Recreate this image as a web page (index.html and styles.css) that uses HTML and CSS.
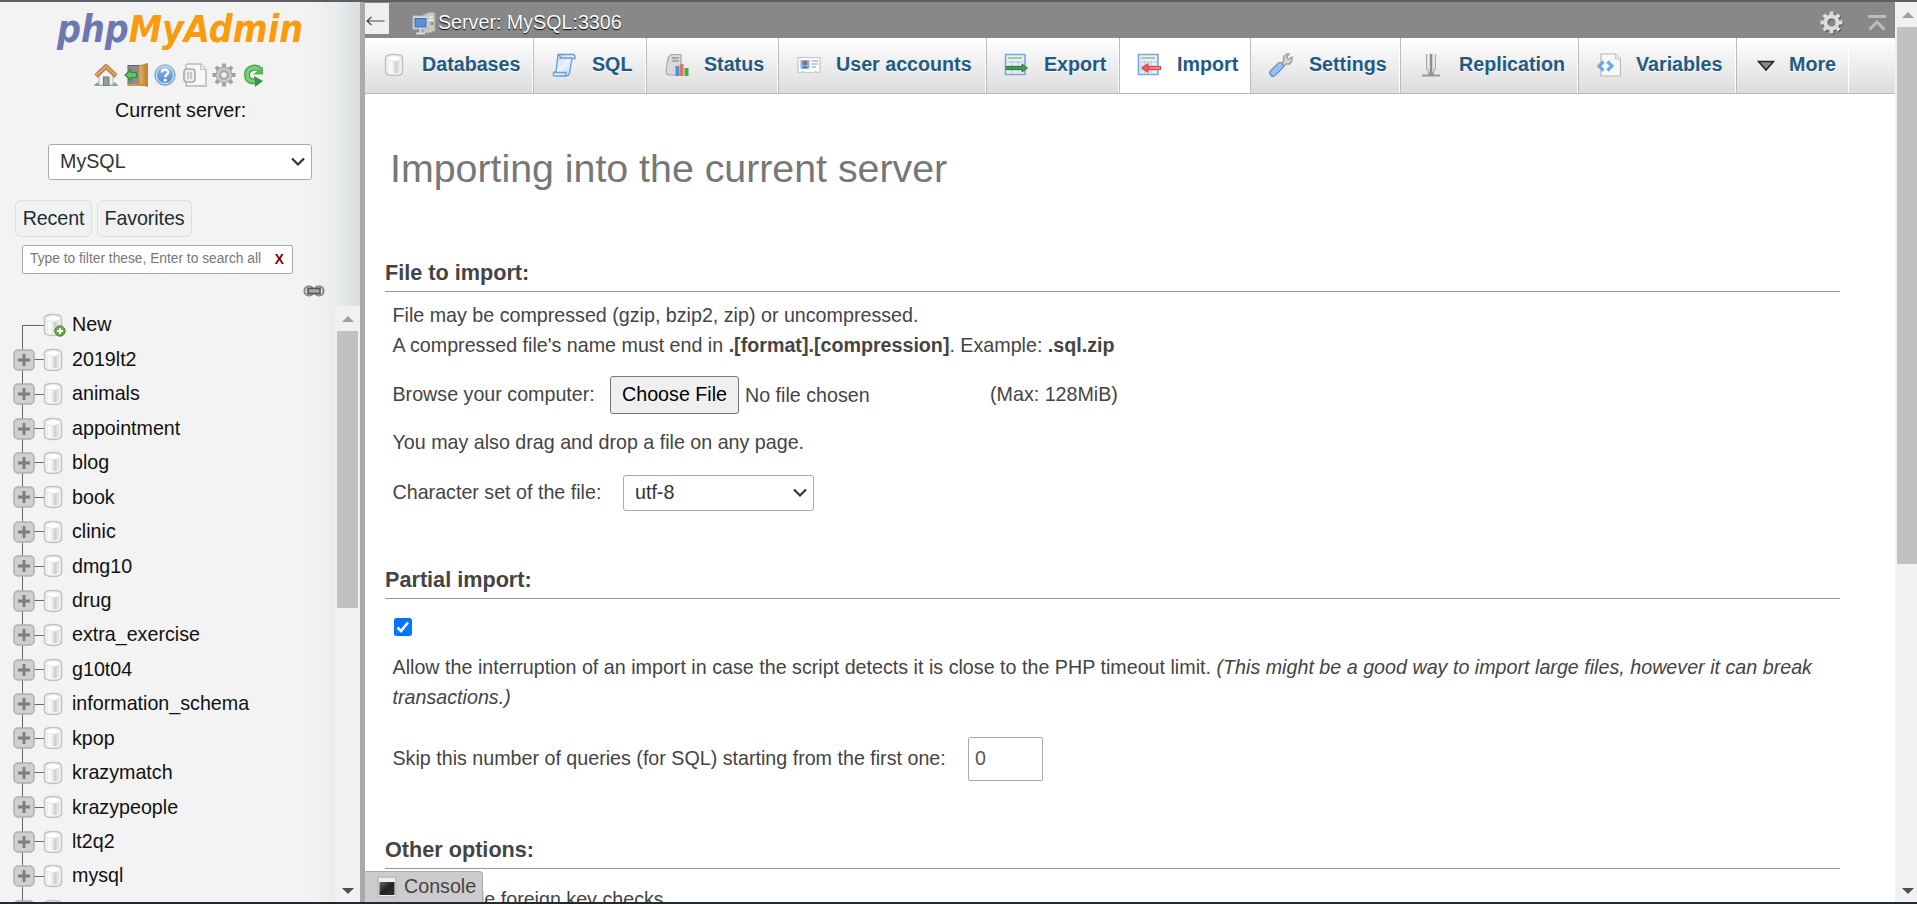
FILE: index.html
```html
<!DOCTYPE html>
<html lang="en">
<head>
<meta charset="utf-8">
<title>phpMyAdmin</title>
<link rel="stylesheet" href="styles.css">
</head>
<body>
<svg class="defs" aria-hidden="true">
  <defs>
    <linearGradient id="metal" x1="0" x2="1" y1="0" y2="0"><stop offset="0" stop-color="#e6e6e6"/><stop offset=".25" stop-color="#fdfdfd"/><stop offset=".45" stop-color="#ededed"/><stop offset=".65" stop-color="#cdcdcd"/><stop offset=".85" stop-color="#e4e4e4"/><stop offset="1" stop-color="#eee"/></linearGradient>
    <linearGradient id="door" x1="0" x2="1"><stop offset="0" stop-color="#e9b565"/><stop offset="1" stop-color="#bb7c2c"/></linearGradient>
    <linearGradient id="ball" x1="0" x2="0" y1="0" y2="1"><stop offset="0" stop-color="#8fbbe6"/><stop offset="1" stop-color="#4a86c8"/></linearGradient>
    <linearGradient id="scroll" x1="0" x2="1" y1="0" y2="1"><stop offset="0" stop-color="#b9d7f3"/><stop offset=".5" stop-color="#eaf4fd"/><stop offset="1" stop-color="#a6cbee"/></linearGradient>
    <linearGradient id="term" x1="0" x2="1" y1="0" y2="1"><stop offset="0" stop-color="#666"/><stop offset=".5" stop-color="#222"/><stop offset="1" stop-color="#333"/></linearGradient>
    <symbol id="db" viewBox="0 0 20 24"><path d="M1.500 5C1.500 2.500 5 1.500 10 1.500S18.500 2.500 18.500 5V18.500C18.500 21.500 15 22.500 10 22.500S1.500 21.500 1.500 18.500Z" fill="#f6f6f6" stroke="#c2c2c2" stroke-width="1.500"/><path d="M3.200 6V18.500C4 21 16 21 16.800 18.500V6Z" fill="url(#metal)"/><ellipse cx="10" cy="5.500" rx="7" ry="2.800" fill="#fff" stroke="#e2e2e2" stroke-width=".8"/></symbol>
    <symbol id="plus" viewBox="0 0 22 22"><rect x="1" y="1" width="20" height="20" rx="4" fill="#cfcfcf" stroke="#b0b0b0" stroke-width="1.500"/><path d="M5 11H17M11 5V17" stroke="#7c7c7c" stroke-width="2.800"/></symbol>
    <symbol id="gear" viewBox="0 0 24 24"><path d="M12 .5V5M12 19V23.500M.5 12H5M19 12H23.500M3.900 3.900L7 7M17 17L20.100 20.100M3.900 20.100L7 17M17 7L20.100 3.900" stroke="currentColor" stroke-width="4"/><circle cx="12" cy="12" r="6.300" fill="none" stroke="currentColor" stroke-width="4.200"/></symbol>
    <symbol id="sheet" viewBox="0 0 24 24"><path d="M1.500 1.500H21V21.500H1.500Z" fill="#e6effa" stroke="#7fa4da" stroke-width="1.600"/><path d="M4 5H18" stroke="#a9cf8f" stroke-width="2"/><path d="M3 9H20M3 13H20M3 17H20M8 8V20M14 8V20" stroke="#b7c8df" stroke-width="1.200"/></symbol>
  </defs>
</svg>

<div class="window">
  <aside class="sidebar">
    <svg class="logo" viewBox="0 0 252 42"><text x="1" y="31" textLength="246" lengthAdjust="spacingAndGlyphs"><tspan class="logo-php">php</tspan><tspan class="logo-admin">MyAdmin</tspan></text></svg>

    <nav class="tools">
      <svg class="tool" viewBox="0 0 24 24"><path d="M0 23Q3 17 7 21H17Q21 17 24 23Z" fill="#6ab66a"/><path d="M5 11L12 5L19 11V22H5Z" fill="#f2f2f2" stroke="#b9b9b9"/><rect x="9.500" y="14" width="5.500" height="8.500" fill="#9a9a9a" stroke="#777"/><path d="M2 13L12 3.500L22 13" fill="none" stroke="#b97a3c" stroke-width="4.600" stroke-linejoin="round"/><path d="M2 12.500L12 3.500L22 12.500" fill="none" stroke="#dba469" stroke-width="2.400"/></svg>
      <svg class="tool exit" viewBox="0 0 24 24"><rect x="4" y="2.500" width="13" height="19.500" fill="#8d8d8d" stroke="#666"/><path d="M4 22H24" stroke="#d09a50" stroke-width="2"/><path d="M15 3L23.500 .5V23.500L15 21Z" fill="url(#door)" stroke="#b57d35" stroke-width=".8"/><path d="M1 12L7 6.500V9.500H12.500V14.500H7V17.500Z" fill="#66c666" stroke="#2f8b37" stroke-width="1.200"/></svg>
      <svg class="tool help" viewBox="0 0 24 24"><circle cx="12" cy="12" r="10.300" fill="url(#ball)" stroke="#8fb1d9"/><circle cx="12" cy="12" r="8.600" fill="none" stroke="#d4e5f6" stroke-width="1.200"/><path d="M8.800 9.500C8.800 5.500 15.200 5.500 15.200 9.300C15.200 11.800 12.200 11.500 12.200 14.300" fill="none" stroke="#fff" stroke-width="2.400"/><circle cx="12.200" cy="17.300" r="1.500" fill="#fff"/></svg>
      <svg class="tool docs" viewBox="0 0 24 24"><path d="M5 1H17.500L23 6.500V23H3V3Q3 1 5 1Z" fill="#f8f8f8" stroke="#b5b5b5" stroke-width="1.400"/><path d="M17.500 1V6.500H23" fill="#e8e8e8" stroke="#c4c4c4"/><rect x="1" y="6" width="11" height="13" rx="3" fill="#ededed" stroke="#aaa" stroke-width="1.600"/><path d="M5 9V16M8 9V16" stroke="#c2c2c2" stroke-width="1.800"/></svg>
      <svg class="tool settings" viewBox="0 0 24 24"><use href="#gear"/><circle cx="12" cy="12" r="6.300" fill="none" stroke="#c9c9c9" stroke-width="2.600"/><circle cx="12" cy="12" r="3.400" fill="#f3f3f3" stroke="#999" stroke-width="1.200"/></svg>
      <svg class="tool reload" viewBox="0 0 24 24"><path d="M18 6.800C13.500 2.500 5 5 5 12C5 17.500 9 18.500 12.500 18.500" fill="none" stroke="#46a04a" stroke-width="6"/><path d="M18 6.800C13.500 2.500 5 5 5 12C5 17.500 9 18.500 12.500 18.500" fill="none" stroke="#76cf76" stroke-width="3.500"/><path d="M12 13L21 18L13 24Z" fill="#3d9142"/><path d="M11 11.500H21V4Z" fill="#58b75b"/></svg>
    </nav>

    <div class="server-label">Current server:</div>
    <div class="select server-select"><span>MySQL</span><svg class="chevron" viewBox="0 0 14 10"><path d="M1 1.500L7 7.500L13 1.500"/></svg></div>

    <div class="quick"><a class="quick-link recent">Recent</a><a class="quick-link favorites">Favorites</a></div>
    <div class="filter"><span>Type to filter these, Enter to search all</span><b>X</b></div>
    <svg class="chain" viewBox="0 0 22 12"><rect x="1.500" y="1.500" width="9" height="9" rx="4" fill="#ddd" stroke="#8a8a8a" stroke-width="2"/><rect x="11.500" y="1.500" width="9" height="9" rx="4" fill="#ddd" stroke="#8a8a8a" stroke-width="2"/><rect x="5" y="3.500" width="12" height="5" fill="#aaa" stroke="#555" stroke-width="1.600"/></svg>

    <div class="tree-pane">
      <ul class="tree">
        <li class="new"><span class="branch"></span><svg class="db"><use href="#db"/></svg><svg class="badge" viewBox="0 0 12 12"><circle cx="6" cy="6" r="5.200" fill="#6aa84f" stroke="#4d8638"/><path d="M3 6H9M6 3V9" stroke="#fff" stroke-width="1.800"/></svg>New</li>
        <li><svg class="plus"><use href="#plus"/></svg><svg class="db"><use href="#db"/></svg>2019lt2</li>
        <li><svg class="plus"><use href="#plus"/></svg><svg class="db"><use href="#db"/></svg>animals</li>
        <li><svg class="plus"><use href="#plus"/></svg><svg class="db"><use href="#db"/></svg>appointment</li>
        <li><svg class="plus"><use href="#plus"/></svg><svg class="db"><use href="#db"/></svg>blog</li>
        <li><svg class="plus"><use href="#plus"/></svg><svg class="db"><use href="#db"/></svg>book</li>
        <li><svg class="plus"><use href="#plus"/></svg><svg class="db"><use href="#db"/></svg>clinic</li>
        <li><svg class="plus"><use href="#plus"/></svg><svg class="db"><use href="#db"/></svg>dmg10</li>
        <li><svg class="plus"><use href="#plus"/></svg><svg class="db"><use href="#db"/></svg>drug</li>
        <li><svg class="plus"><use href="#plus"/></svg><svg class="db"><use href="#db"/></svg>extra_exercise</li>
        <li><svg class="plus"><use href="#plus"/></svg><svg class="db"><use href="#db"/></svg>g10t04</li>
        <li><svg class="plus"><use href="#plus"/></svg><svg class="db"><use href="#db"/></svg>information_schema</li>
        <li><svg class="plus"><use href="#plus"/></svg><svg class="db"><use href="#db"/></svg>kpop</li>
        <li><svg class="plus"><use href="#plus"/></svg><svg class="db"><use href="#db"/></svg>krazymatch</li>
        <li><svg class="plus"><use href="#plus"/></svg><svg class="db"><use href="#db"/></svg>krazypeople</li>
        <li><svg class="plus"><use href="#plus"/></svg><svg class="db"><use href="#db"/></svg>lt2q2</li>
        <li><svg class="plus"><use href="#plus"/></svg><svg class="db"><use href="#db"/></svg>mysql</li>
        <li><svg class="plus"><use href="#plus"/></svg><svg class="db"><use href="#db"/></svg></li>
      </ul>
      <div class="scrollbar tree-scroll"><i class="up"></i><i class="thumb"></i><i class="down"></i></div>
    </div>
  </aside>

  <div class="divider"></div>

  <main class="content">
    <header class="crumb">
      <span class="collapse"><svg viewBox="0 0 24 12"><path d="M19.500 6H2M6.500 2L2 6L6.500 10"/></svg></span>
      <svg class="host" viewBox="0 0 24 24"><path d="M11 4L18 1L23 2V20L17 22H11Z" fill="#c9c9c9" stroke="#a4a4a4"/><path d="M14 6H21M14 9H21" stroke="#eee" stroke-width="1.500"/><rect x="18.500" y="11" width="3" height="3" fill="#69b54d"/><rect x="1" y="5" width="15" height="13" fill="#dcdcdc" stroke="#bbb"/><rect x="3" y="7.500" width="11" height="8.500" fill="#5d8fd8" stroke="#3e6db5"/><path d="M8.500 18V22M4 22.500H13" stroke="#ddd" stroke-width="2"/></svg>
      <span class="crumb-text">Server: MySQL:3306</span>
      <svg class="page-gear"><use href="#gear"/></svg>
      <svg class="to-top" viewBox="0 0 18 16"><path d="M0 1.500H18M1.500 14.500L9 7L16.500 14.500"/></svg>
    </header>

    <nav class="tabs">
      <a class="tab t-databases"><svg class="ico"><use href="#db"/></svg><span>Databases</span></a>
      <a class="tab t-sql"><svg class="ico" viewBox="0 0 24 24"><path d="M6 1.500H21Q23.500 2 23 5.500H20L17.500 20Q17 23 14 23H2Q.5 21 2 19H4Z" fill="url(#scroll)" stroke="#6a9dd3" stroke-width="1.300"/><path d="M2 19.500H14Q13 22 15 22.500M6 1.500Q9 2 8 5H20" fill="none" stroke="#6a9dd3" stroke-width="1.300"/></svg><span>SQL</span></a>
      <a class="tab t-status"><svg class="ico" viewBox="0 0 24 24"><path d="M3 5L6 1.500H16V20L13 22H3Q1 21 1 18Z" fill="#d9d9d9" stroke="#a9a9a9" stroke-width="1.200"/><path d="M7 5H14M7 8H14" stroke="#999" stroke-width="1.400"/><rect x="10.500" y="13" width="3.800" height="10" fill="#4e8de0"/><rect x="14.800" y="11" width="3.800" height="12" fill="#ee7350"/><rect x="19.500" y="15" width="4" height="8" fill="#43aa4d"/></svg><span>Status</span></a>
      <a class="tab t-users"><svg class="ico" viewBox="0 0 24 24"><path d="M1 4.500H23V19.500H20Q18.500 17.500 17 19.500H7Q5.500 17.500 4 19.500H1Z" fill="#fafafa" stroke="#c6c6c6" stroke-width="1.200"/><rect x="3.500" y="7" width="9" height="8.500" fill="#82b4ea"/><circle cx="8" cy="10" r="2.300" fill="#a9683b"/><path d="M4.500 15.500Q8 10.500 11.500 15.500Z" fill="#4678b8"/><path d="M14.500 8H21M14.500 11H21M14.500 14H19" stroke="#aebfd0" stroke-width="1.300"/></svg><span>User accounts</span></a>
      <a class="tab t-export"><svg class="ico" viewBox="0 0 24 24"><use href="#sheet"/><path d="M2 13.500H18V11L23.500 15L18 19V16.500H2Z" fill="#4c9a4a" stroke="#2f7b35"/></svg><span>Export</span></a>
      <a class="tab t-import active"><svg class="ico" viewBox="0 0 24 24"><use href="#sheet"/><path d="M24 13.500H11V10.500L4.500 15L11 19.500V16.500H24Z" fill="#f0575b" stroke="#d93e48"/><path d="M13 15H23" stroke="#ffb3b3"/></svg><span>Import</span></a>
      <a class="tab t-settings"><svg class="ico" viewBox="0 0 24 24"><path d="M10 13L15 8Q13 3 18 1L20 1L17.500 4.500L19.500 6.500L23 4V7Q22 12 17 11L12.500 15.500Z" fill="#d5d5d5" stroke="#9a9a9a" stroke-width="1.300"/><path d="M4 20L11 13" stroke="#5b86cc" stroke-width="7.500" stroke-linecap="round"/><path d="M4.300 19.700L11 13" stroke="#9dbff0" stroke-width="5.500" stroke-linecap="round"/></svg><span>Settings</span></a>
      <a class="tab t-replication"><svg class="ico" viewBox="0 0 24 24"><path d="M5.500 1V16L8 19.500H12L14.500 16V1" fill="#d2d2d2" stroke="#ababab"/><path d="M10 1V20" stroke="#8e8e8e" stroke-width="2"/><path d="M7.500 1V15M13 1V15" stroke="#f4f4f4" stroke-width="1.300"/><path d="M1 22.500H19M7 20.500H13" stroke="#999" stroke-width="2"/></svg><span>Replication</span></a>
      <a class="tab t-variables"><svg class="ico" viewBox="0 0 24 24"><path d="M4 1H18.500L23.500 6V23H4Z" fill="#f7f7f7" stroke="#b9b9b9" stroke-width="1.200"/><path d="M18.500 1V6H23.500" fill="#e5e5e5" stroke="#c6c6c6"/><path d="M6.500 8.500L2 13L6.500 17.500M10.500 8.500L15 13L10.500 17.500" fill="none" stroke="#6fa8e2" stroke-width="3.200"/></svg><span>Variables</span></a>
      <a class="tab t-more"><svg class="ico" viewBox="0 0 24 24"><path d="M4.500 8.500H19.500L12 17Z" fill="#888" stroke="#222" stroke-width="1.500"/></svg><span>More</span></a>
    </nav>

    <section class="page">
      <h2>Importing into the current server</h2>

      <h3 class="first">File to import:</h3>
      <div class="group">
        <p class="format">File may be compressed (gzip, bzip2, zip) or uncompressed.<br>A compressed file's name must end in <b>.[format].[compression]</b>. Example: <b>.sql.zip</b></p>
        <div class="row browse"><label>Browse your computer:</label><span class="choose">Choose File</span><span class="nofile">No file chosen</span><span>(Max: 128MiB)</span></div>
        <p class="drag">You may also drag and drop a file on any page.</p>
        <div class="row charset"><label>Character set of the file:</label><div class="select"><span>utf-8</span><svg class="chevron" viewBox="0 0 14 10"><path d="M1 1.500L7 7.500L13 1.500"/></svg></div></div>
      </div>

      <h3 class="second">Partial import:</h3>
      <div class="group">
        <svg class="check" viewBox="0 0 18 18"><rect width="18" height="18" rx="2.500"/><path d="M3.500 9.500L7 13L14 4.500"/></svg>
        <p class="allow">Allow the interruption of an import in case the script detects it is close to the PHP timeout limit. <i>(This might be a good way to import large files, however it can break transactions.)</i></p>
        <div class="row skip"><label>Skip this number of queries (for SQL) starting from the first one:</label><span class="number">0</span></div>
      </div>

      <h3 class="third">Other options:</h3>
      <div class="group fk"><svg class="check" viewBox="0 0 18 18"><rect width="18" height="18" rx="2.500"/><path d="M3.500 9.500L7 13L14 4.500"/></svg><span>Enable foreign key checks</span></div>
    </section>

    <div class="console"><svg viewBox="0 0 20 22"><rect x="1" y="1" width="18" height="20" fill="#eee" stroke="#bbb" stroke-width="1.500"/><rect x="2.500" y="6" width="15" height="13" fill="url(#term)"/></svg>Console</div>
  </main>

  <div class="scrollbar page-scroll"><i class="up"></i><i class="thumb"></i><i class="down"></i></div>
</div>
</body>
</html>
```
FILE: styles.css
```css
* { box-sizing: border-box; }

body {
  margin: 0;
  font: 19.68px/29.5px "Liberation Sans", Arial, sans-serif;
  color: #444;
  background: #fff;
  overflow: hidden;
}

p, h2, h3, ul { margin: 0; padding: 0; }
svg { display: block; flex: none; }
.defs { position: absolute; width: 0; height: 0; }

.window {
  display: flex;
  height: 904px;
  border-top: 2px solid #5f5e63;
  border-bottom: 2px solid #24292b;
}

/* Navigation panel */
.sidebar {
  display: flex;
  flex-direction: column;
  width: 360px;
  flex: none;
  overflow: hidden;
  color: #111;
  background: linear-gradient(to right, #f3f3f3 308px, #ebecee 335px, #d9dedf 360px);
}

.logo { width: 252px; height: 42px; margin: 9px 0 0 56px; overflow: visible; }
.logo text { font: italic bold 37px "DejaVu Sans", sans-serif; }
.logo-php { fill: #6c78af; }
.logo-admin { fill: #f89c0e; }

.tools { display: flex; margin: 10px 0 0 94px; height: 24px; }
.tool { width: 24px; height: 24px; }
.tool.exit { margin-left: 6px; }
.tool.help { margin-left: 5px; }
.tool.docs { margin-left: 6px; }
.tool.settings { margin-left: 5px; color: #a3a3a3; }
.tool.reload { margin-left: 6px; }

.server-label { margin: 8px 0 0 115px; height: 30px; line-height: 30px; white-space: nowrap; }

.select {
  display: flex;
  align-items: center;
  justify-content: space-between;
  height: 36px;
  padding: 0 6px 0 11px;
  border: 1px solid #aaa;
  border-radius: 3px;
  background: #fff;
  color: #333;
}
.chevron { width: 14px; height: 10px; }
.chevron path { fill: none; stroke: #333; stroke-width: 2.2; }
.server-select { width: 264px; margin: 19px 0 0 48px; }

.quick { display: flex; gap: 5px; margin: 20px 0 0 15px; }
.quick-link {
  height: 37px;
  line-height: 34px;
  text-align: center;
  letter-spacing: -0.1px;
  border: 1px solid #ddd;
  border-radius: 6px;
  color: #222c35;
  background: #f1f1f1;
}
.recent { width: 77px; }
.favorites { width: 95px; }

.filter {
  display: flex;
  justify-content: space-between;
  width: 271px;
  height: 29px;
  margin: 8px 0 0 22px;
  padding: 0 8px 0 7px;
  font-size: 13.78px;
  line-height: 26px;
  white-space: nowrap;
  color: #777;
  border: 1px solid #aaa;
  border-radius: 2px;
  background: #fff;
}
.filter b { color: #800000; line-height: 28px; }

.chain { width: 22px; height: 12px; margin: 11px 0 0 303px; }

.tree-pane { display: flex; margin-top: 9px; height: 596px; overflow: hidden; }
.tree { width: 335px; list-style: none; padding-top: 2px; }
.tree li {
  display: flex;
  align-items: center;
  position: relative;
  height: 34.45px;
  padding-left: 13px;
  white-space: nowrap;
  background:
    linear-gradient(#666, #666) 22px 0 / 1px 100% no-repeat,
    linear-gradient(#666, #666) 30px 50% / 16px 1px no-repeat;
}
.tree li.new { background: linear-gradient(#666, #666) 22px 17px / 1px 18px no-repeat; }
.branch { width: 22px; height: 1px; margin: 0 -1px 0 9px; background: #666; }
.tree .plus { width: 22px; height: 22px; margin-right: 8px; }
.tree .db { width: 20px; height: 24px; margin-right: 9px; }
.tree .badge { position: absolute; left: 54px; top: 17px; width: 12px; height: 12px; }

.scrollbar { display: flex; flex-direction: column; align-items: center; background: #f1f1f1; flex: none; }
.scrollbar .up, .scrollbar .down { border: 6px solid transparent; width: 0; height: 0; }
.scrollbar .up { border-top: 0; border-bottom-color: #a0a0a0; }
.scrollbar .down { margin-top: auto; margin-bottom: 8px; border-bottom: 0; border-top-color: #505050; }
.scrollbar .thumb { background: #c1c1c1; }
.tree-scroll { width: 25px; padding-top: 10px; }
.tree-scroll .thumb { width: 21px; height: 277px; margin-top: 9px; }
.page-scroll { width: 22px; padding-top: 10px; }
.page-scroll .thumb { width: 20px; height: 537px; margin: 9px 0 0 2px; }
.page-scroll .up, .page-scroll .down { margin-left: 3px; }

.divider { width: 5px; flex: none; background: #aaa; }

/* Main area */
.content { position: relative; width: 1530px; overflow: hidden; background: #fff; }

.crumb { display: flex; height: 36px; background: #888; }
.collapse { width: 24px; height: 31px; margin-top: 1px; padding-top: 12px; background: #efefef; }
.collapse svg { width: 24px; height: 12px; }
.collapse path { fill: none; stroke: #444; stroke-width: 1.2; }
.host { width: 24px; height: 24px; margin: 9px 2px 0 23px; }
.crumb-text { line-height: 40px; color: #fff; text-shadow: 0 1px 1px #000; white-space: nowrap; }
.page-gear { width: 23px; height: 23px; margin: 9px 25px 0 auto; color: #dcdcdc; filter: drop-shadow(1px 1px 0 #555); }
.to-top { width: 18px; height: 16px; margin: 13px 9px 0 0; }
.to-top path { fill: none; stroke: #bcbcbc; stroke-width: 3; }

.tabs {
  display: flex;
  height: 56px;
  border-bottom: 1px solid #bbb;
  background: linear-gradient(#fff, #dcdcdc);
}
.tab {
  display: flex;
  align-items: center;
  height: 55px;
  padding-left: 19px;
  padding-bottom: 1px;
  font-weight: bold;
  color: #235a81;
  text-shadow: 0 1px 0 #fff;
  border-left: 1px solid #bbb;
  border-right: 1px solid #fff;
  white-space: nowrap;
}
.tab.active { background: #fff; }
.ico { width: 24px; height: 24px; margin-right: 15px; }
.t-databases { width: 168px; border-left: 0; }
.t-databases .ico { margin-left: -2px; margin-right: 16px; }
.t-sql { width: 113px; padding-left: 18px; }
.t-sql .ico { margin-right: 16px; }
.t-status { width: 132px; padding-left: 18px; }
.t-status .ico { margin-right: 15px; }
.t-users { width: 208px; padding-left: 18px; }
.t-users .ico { margin-right: 15px; }
.t-export { width: 133px; padding-left: 17px; }
.t-export .ico { margin-right: 16px; }
.t-import { width: 131px; padding-left: 17px; }
.t-import .ico { margin-right: 16px; }
.t-settings { width: 150px; padding-left: 18px; }
.t-settings .ico { margin-right: 16px; }
.t-replication { width: 178px; padding-left: 20px; }
.t-replication .ico { margin-right: 14px; }
.t-variables { width: 158px; padding-left: 18px; }
.t-variables .ico { margin-right: 15px; }
.t-more { width: 113px; padding-left: 17px; }
.t-more .ico { margin-right: 11px; }

.page { margin: 0 55px 0 20px; }
h2 { padding: 44px 0 0 5px; font-size: 39.36px; font-weight: normal; line-height: 60px; letter-spacing: -0.02px; color: #777; }
h3 { height: 35px; font-size: 21.65px; line-height: 32px; border-bottom: 1px solid #999; }
h3.first { margin-top: 59px; }
h3.second { margin-top: 53px; }
h3.third { margin-top: 53px; }
.group { padding-left: 7.5px; }
.row { display: flex; align-items: center; white-space: nowrap; }

.format { height: 68px; padding-top: 9px; }
.browse { height: 38px; margin-top: 16px; }
.browse label { width: 217.5px; }
.choose {
  width: 129px;
  height: 38px;
  line-height: 35px;
  text-align: center;
  color: #000;
  background: #efefef;
  border: 1px solid #767676;
  border-radius: 3px;
}
.nofile { width: 251px; margin-top: 2px; padding-left: 6px; }
.drag { height: 30px; margin-top: 14px; }
.charset { height: 36px; margin-top: 17px; }
.charset label { width: 230.5px; }
.charset .select { width: 191px; }

.check { width: 18px; height: 18px; margin-left: 1.5px; }
.check rect { fill: #0075ff; }
.check path { fill: none; stroke: #fff; stroke-width: 2.6; }
.group > .check { margin-top: 19px; }
.allow { height: 59px; margin-top: 17px; letter-spacing: 0.01px; }
.skip { height: 44px; margin-top: 25px; }
.skip label { width: 575.5px; }
.number {
  width: 75px;
  height: 44px;
  padding-left: 6px;
  line-height: 41px;
  color: #555;
  border: 1px solid #aaa;
  border-radius: 2px;
}
.fk { display: flex; align-items: center; gap: 22px; padding-top: 16px; white-space: nowrap; }
.fk > .check { margin-top: 0; }

.console {
  position: absolute;
  left: 0;
  bottom: 0;
  display: flex;
  align-items: center;
  gap: 7px;
  width: 118px;
  height: 31px;
  padding-left: 12px;
  border: 1px solid #aaa;
  border-left: 0;
  border-bottom: 0;
  border-radius: 0 4px 0 0;
  background: #ccc;
}
.console svg { width: 20px; height: 22px; }
```
